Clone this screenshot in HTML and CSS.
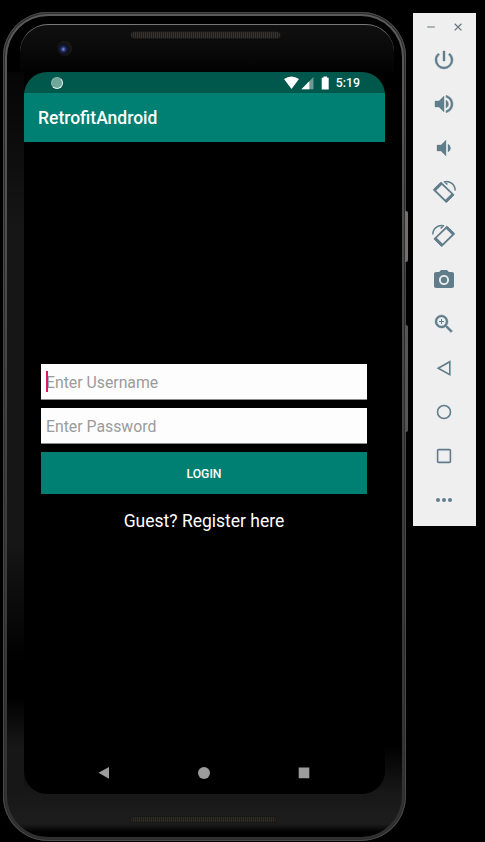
FILE: index.html
```html
<!DOCTYPE html>
<html lang="en">
<head>
<meta charset="utf-8">
<title>RetrofitAndroid</title>
<link rel="stylesheet" href="styles.css">
</head>
<body>
<main class="emulator">
  <section class="device">
    <div class="bezel">
      <header class="bezel-top">
        <span class="camera"></span>
        <span class="speaker"></span>
      </header>
      <div class="screen">
        <div class="status-bar">
          <span class="sync"></span>
          <svg class="status-icons" width="48" height="14" viewBox="0 0 48 14">
            <path fill="#fff" d="M0 3.1Q7.5-2.2 15 3.1L7.5 13Z"/>
            <path fill="#6b9b91" d="M29.5 1V13.3H17.4Z"/>
            <path fill="#fff" d="M25.3 5.3V13.3H17.4Z"/>
            <path fill="#fff" d="M39.5.5h3.6v1.2h1.6v11.8h-7V1.7h1.8z"/>
          </svg>
          <span class="clock">5:19</span>
        </div>
        <div class="app-bar"><h1>RetrofitAndroid</h1></div>
        <form class="login">
          <div class="field focused">Enter Username</div>
          <div class="field">Enter Password</div>
          <button class="submit" type="button">LOGIN</button>
          <a class="register">Guest? Register here</a>
        </form>
        <nav class="nav-bar">
          <svg width="14" height="14" viewBox="0 0 14 14"><path d="M1.500 6.800 12 1v11.800z"/></svg>
          <svg width="14" height="14" viewBox="0 0 14 14"><circle cx="7" cy="7" r="6"/></svg>
          <svg width="14" height="14" viewBox="0 0 14 14"><path d="M1.700 1.500h10.600v10.800H1.700z"/></svg>
        </nav>
      </div>
      <footer class="bezel-bottom"><span class="speaker low"></span></footer>
    </div>
    <span class="side-key power-key"></span>
    <span class="side-key volume-key"></span>
  </section>

  <aside class="toolbar">
    <div class="window-controls">
      <svg width="10" height="10" viewBox="0 0 10 10"><path d="M1.200 5h7.600"/></svg>
      <svg class="close" width="10" height="10" viewBox="0 0 10 10"><path d="M1.700 1.700l6.700 6.700M8.400 1.700 1.700 8.400"/></svg>
    </div>
    <div class="tool"><svg viewBox="0 0 24 24"><path d="M13 3h-2v10h2V3zm4.830 2.170-1.420 1.420A6.920 6.920 0 0 1 19 12c0 3.870-3.130 7-7 7A6.995 6.995 0 0 1 7.580 6.580L6.170 5.170A8.932 8.932 0 0 0 3 12a9 9 0 0 0 18 0c0-2.740-1.230-5.180-3.170-6.830z" stroke="#607d8b" stroke-width=".4"/></svg></div>
    <div class="tool"><svg viewBox="0 0 24 24"><path d="M3 9v6h4l5 5V4L7 9H3zm13.500 3A4.500 4.500 0 0 0 14 7.970v8.050c1.480-.73 2.500-2.250 2.500-4.020zM14 3.230v2.060c2.890.86 5 3.540 5 6.710s-2.110 5.850-5 6.710v2.060c4.010-.91 7-4.490 7-8.770s-2.990-7.860-7-8.770z" stroke="#607d8b" stroke-width=".4"/></svg></div>
    <div class="tool"><svg viewBox="0 0 24 24"><path d="M18.500 12A4.500 4.500 0 0 0 16 7.970v8.050c1.480-.73 2.500-2.250 2.500-4.020zM5 9v6h4l5 5V4L9 9H5z" stroke="#607d8b" stroke-width=".3"/></svg></div>
    <div class="tool"><svg viewBox="0 0 24 24"><g class="rotate"><path class="heavy" d="M2.200 10 9.200 3l12 11.700-7 7z"/><path class="end" d="M2.400 10.300 9.500 3.200M13.900 21.300l7-7"/><path class="arc" d="M11.800 1.900C18 .2 23.200 4.800 23.200 10.600M12.200 1.500l3.200 3"/></g></svg></div>
    <div class="tool"><svg class="mirror" viewBox="0 0 24 24"><g class="rotate"><path class="heavy" d="M2.200 10 9.200 3l12 11.700-7 7z"/><path class="end" d="M2.400 10.300 9.500 3.200M13.900 21.300l7-7"/><path class="arc" d="M11.800 1.900C18 .2 23.200 4.800 23.200 10.600M12.200 1.500l3.200 3"/></g></svg></div>
    <div class="tool"><svg viewBox="0 0 24 24"><circle cx="12" cy="12" r="3.200"/><path d="M9 2 7.170 4H4c-1.100 0-2 .9-2 2v12c0 1.100.9 2 2 2h16c1.100 0 2-.9 2-2V6c0-1.100-.9-2-2-2h-3.170L15 2H9zm3 15c-2.760 0-5-2.240-5-5s2.240-5 5-5 5 2.240 5 5-2.240 5-5 5z"/></svg></div>
    <div class="tool"><svg viewBox="0 0 24 24"><path d="M15.500 14h-.79l-.28-.27A6.471 6.471 0 0 0 16 9.500 6.500 6.500 0 1 0 9.500 16c1.610 0 3.090-.59 4.230-1.570l.27.28v.79l5 4.990L20.490 19l-4.990-5zm-6 0C7.010 14 5 11.990 5 9.500S7.010 5 9.500 5 14 7.010 14 9.500 11.990 14 9.500 14z" stroke="#607d8b" stroke-width=".4"/><path d="M12 10h-2v2H9v-2H7V9h2V7h1v2h2v1z"/></svg></div>
    <div class="tool line"><svg viewBox="0 0 22 22"><path d="M5.200 11.200 16.800 4.700v13z"/></svg></div>
    <div class="tool line"><svg viewBox="0 0 22 22"><circle cx="11" cy="11" r="6.500"/></svg></div>
    <div class="tool line"><svg viewBox="0 0 22 22"><rect x="4.600" y="4.600" width="12.800" height="12.800" rx="1"/></svg></div>
    <div class="tool line dots"><svg viewBox="0 0 22 22"><circle cx="5" cy="11" r="2"/><circle cx="11" cy="11" r="2"/><circle cx="17" cy="11" r="2"/></svg></div>
  </aside>
</main>
</body>
</html>
```
FILE: styles.css
```css
* { box-sizing: border-box; }

body {
  margin: 0;
  background: #000;
  font-family: Roboto, "Liberation Sans", sans-serif;
  overflow: hidden;
}

.emulator {
  display: flex;
  align-items: flex-start;
  gap: 7px;
  width: 485px;
  height: 842px;
  padding: 12px 0 0 3px;
}

/* Phone frame */
.device {
  position: relative;
  flex: none;
  width: 403px;
  height: 829px;
  padding: 4px;
  border-radius: 45px;
  background: linear-gradient(#5b5b5b, #444 45%, #303030);
  box-shadow: inset 0 0 0 1px #484848, inset 0 0 0 2px #2c2c2c;
}

.bezel {
  height: 821px;
  padding: 8px 14px 0 17px;
  border-radius: 41px;
  background:
    linear-gradient(#000, #000 8px, transparent 8px) no-repeat,
    linear-gradient(#050505, #0b0b0b 60px, #161616 160px, #161616 470px, #0b0b0b 530px, #000 590px, #000 625px, #171717 675px) 0 56px / 17px 722px no-repeat,
    linear-gradient(#000 0, #000 730px, #171717 775px, #1c1c1c 800px, #1c1c1c 808px, #000 816px);
}

.bezel-top {
  display: flex;
  height: 48px;
  margin: 0 -6px 0 -4px;
  padding: 7px 0 0 37px;
  border-top: 1px solid #777;
  border-radius: 28px 28px 0 0;
  background: linear-gradient(#101010, #090909 55%, #020202);
}

.camera {
  width: 15px;
  height: 15px;
  margin-top: 9px;
  border-radius: 50%;
  background: radial-gradient(circle at 42% 55%, #8798d7 0, #29387c 2px, #10152a 4px, #101014 6px, #191919 7px);
}

.speaker {
  width: 151px;
  height: 8px;
  margin: -1px 0 0 58px;
  border: 1px solid #171717;
  border-radius: 4px;
  background: repeating-linear-gradient(90deg, #373330 0 1px, #201e1c 1px 2px);
}

/* Screen */
.screen {
  display: flex;
  flex-direction: column;
  width: 361px;
  height: 722px;
  overflow: hidden;
  border-radius: 23px;
  background: #000;
}

.status-bar {
  display: flex;
  flex: none;
  align-items: center;
  height: 21px;
  padding: 0 25px 0 27px;
  background: #00574b;
  color: #fff;
}

.sync {
  width: 12px;
  height: 12px;
  margin-right: auto;
  border: 1.5px solid #8ab5ab;
  border-right-color: #e5f2ef;
  border-bottom-color: #e5f2ef;
  border-radius: 50%;
  background: #71a69b;
}

.status-icons { margin-right: 4px; }

.clock {
  padding-top: 1px;
  font-size: 12.3px;
  font-weight: 500;
  line-height: 21px;
}

.app-bar {
  display: flex;
  flex: none;
  align-items: center;
  height: 49px;
  padding: 1px 14px 0;
  background: #008073;
}

.app-bar h1 {
  margin: 0;
  color: #fff;
  font-size: 17.5px;
  font-weight: 500;
}

.login {
  display: flex;
  flex: 1;
  flex-direction: column;
  padding: 222px 18px 0 17px;
}

.field {
  position: relative;
  height: 36px;
  margin-bottom: 8px;
  padding-left: 5px;
  border-bottom: 1px solid #8c8c8c;
  background: #fdfdfd;
  color: #9b9b9b;
  font-size: 15.8px;
  line-height: 37px;
}

.focused::before {
  content: "";
  position: absolute;
  top: 7px;
  left: 5px;
  width: 1.5px;
  height: 21px;
  background: #d81b60;
}

.submit {
  height: 42px;
  padding: 1px 0 0;
  border: 0;
  background: #008073;
  color: #fff;
  font: 500 12.2px Roboto, "Liberation Sans", sans-serif;
}

.register {
  margin-top: 16px;
  color: #fff;
  font-size: 17.5px;
  line-height: 22px;
  text-align: center;
}

.nav-bar {
  display: flex;
  flex: none;
  justify-content: space-between;
  height: 28.5px;
  padding: 0 74px 0 73px;
  fill: #9c9c9c;
}

.bezel-bottom { padding: 22px 0 0 49px; }
.bezel-bottom .speaker { display: block; margin: 0 0 0 57px; }
.bezel-bottom .low {
  width: 147px;
  height: 7px;
  background: repeating-linear-gradient(90deg, #302d25 0 1px, #1c1b18 1px 2px);
}

.side-key {
  position: absolute;
  right: -2px;
  width: 3px;
  border-radius: 0 2px 2px 0;
  background: #555;
}
.power-key { top: 199px; height: 51px; background: #756d6e; }
.volume-key { top: 313px; height: 107px; }

/* Emulator controls */
.toolbar {
  flex: none;
  width: 63px;
  height: 513px;
  margin-top: 1px;
  background: #efefef;
  fill: #607d8b;
}

.window-controls {
  display: flex;
  height: 25px;
  padding: 9px 0 0 13px;
  gap: 17px;
  fill: none;
  stroke: #8a9297;
  stroke-width: 1.3;
}
.close { stroke: #6a777e; }

.tool {
  display: flex;
  align-items: center;
  justify-content: center;
  height: 44px;
  padding-right: 1px;
}
.tool svg { width: 24px; height: 24px; overflow: visible; }
.line { fill: none; stroke: #607d8b; stroke-width: 1.6; }
.tool.line svg { width: 22px; height: 22px; }
.dots { fill: #607d8b; stroke: none; }
.mirror { transform: scaleX(-1); }
.rotate { fill: none; stroke: #607d8b; }
.heavy { stroke-width: 1.8; }
.end { stroke-width: 3; }
.arc { stroke-width: 1.5; }
```
